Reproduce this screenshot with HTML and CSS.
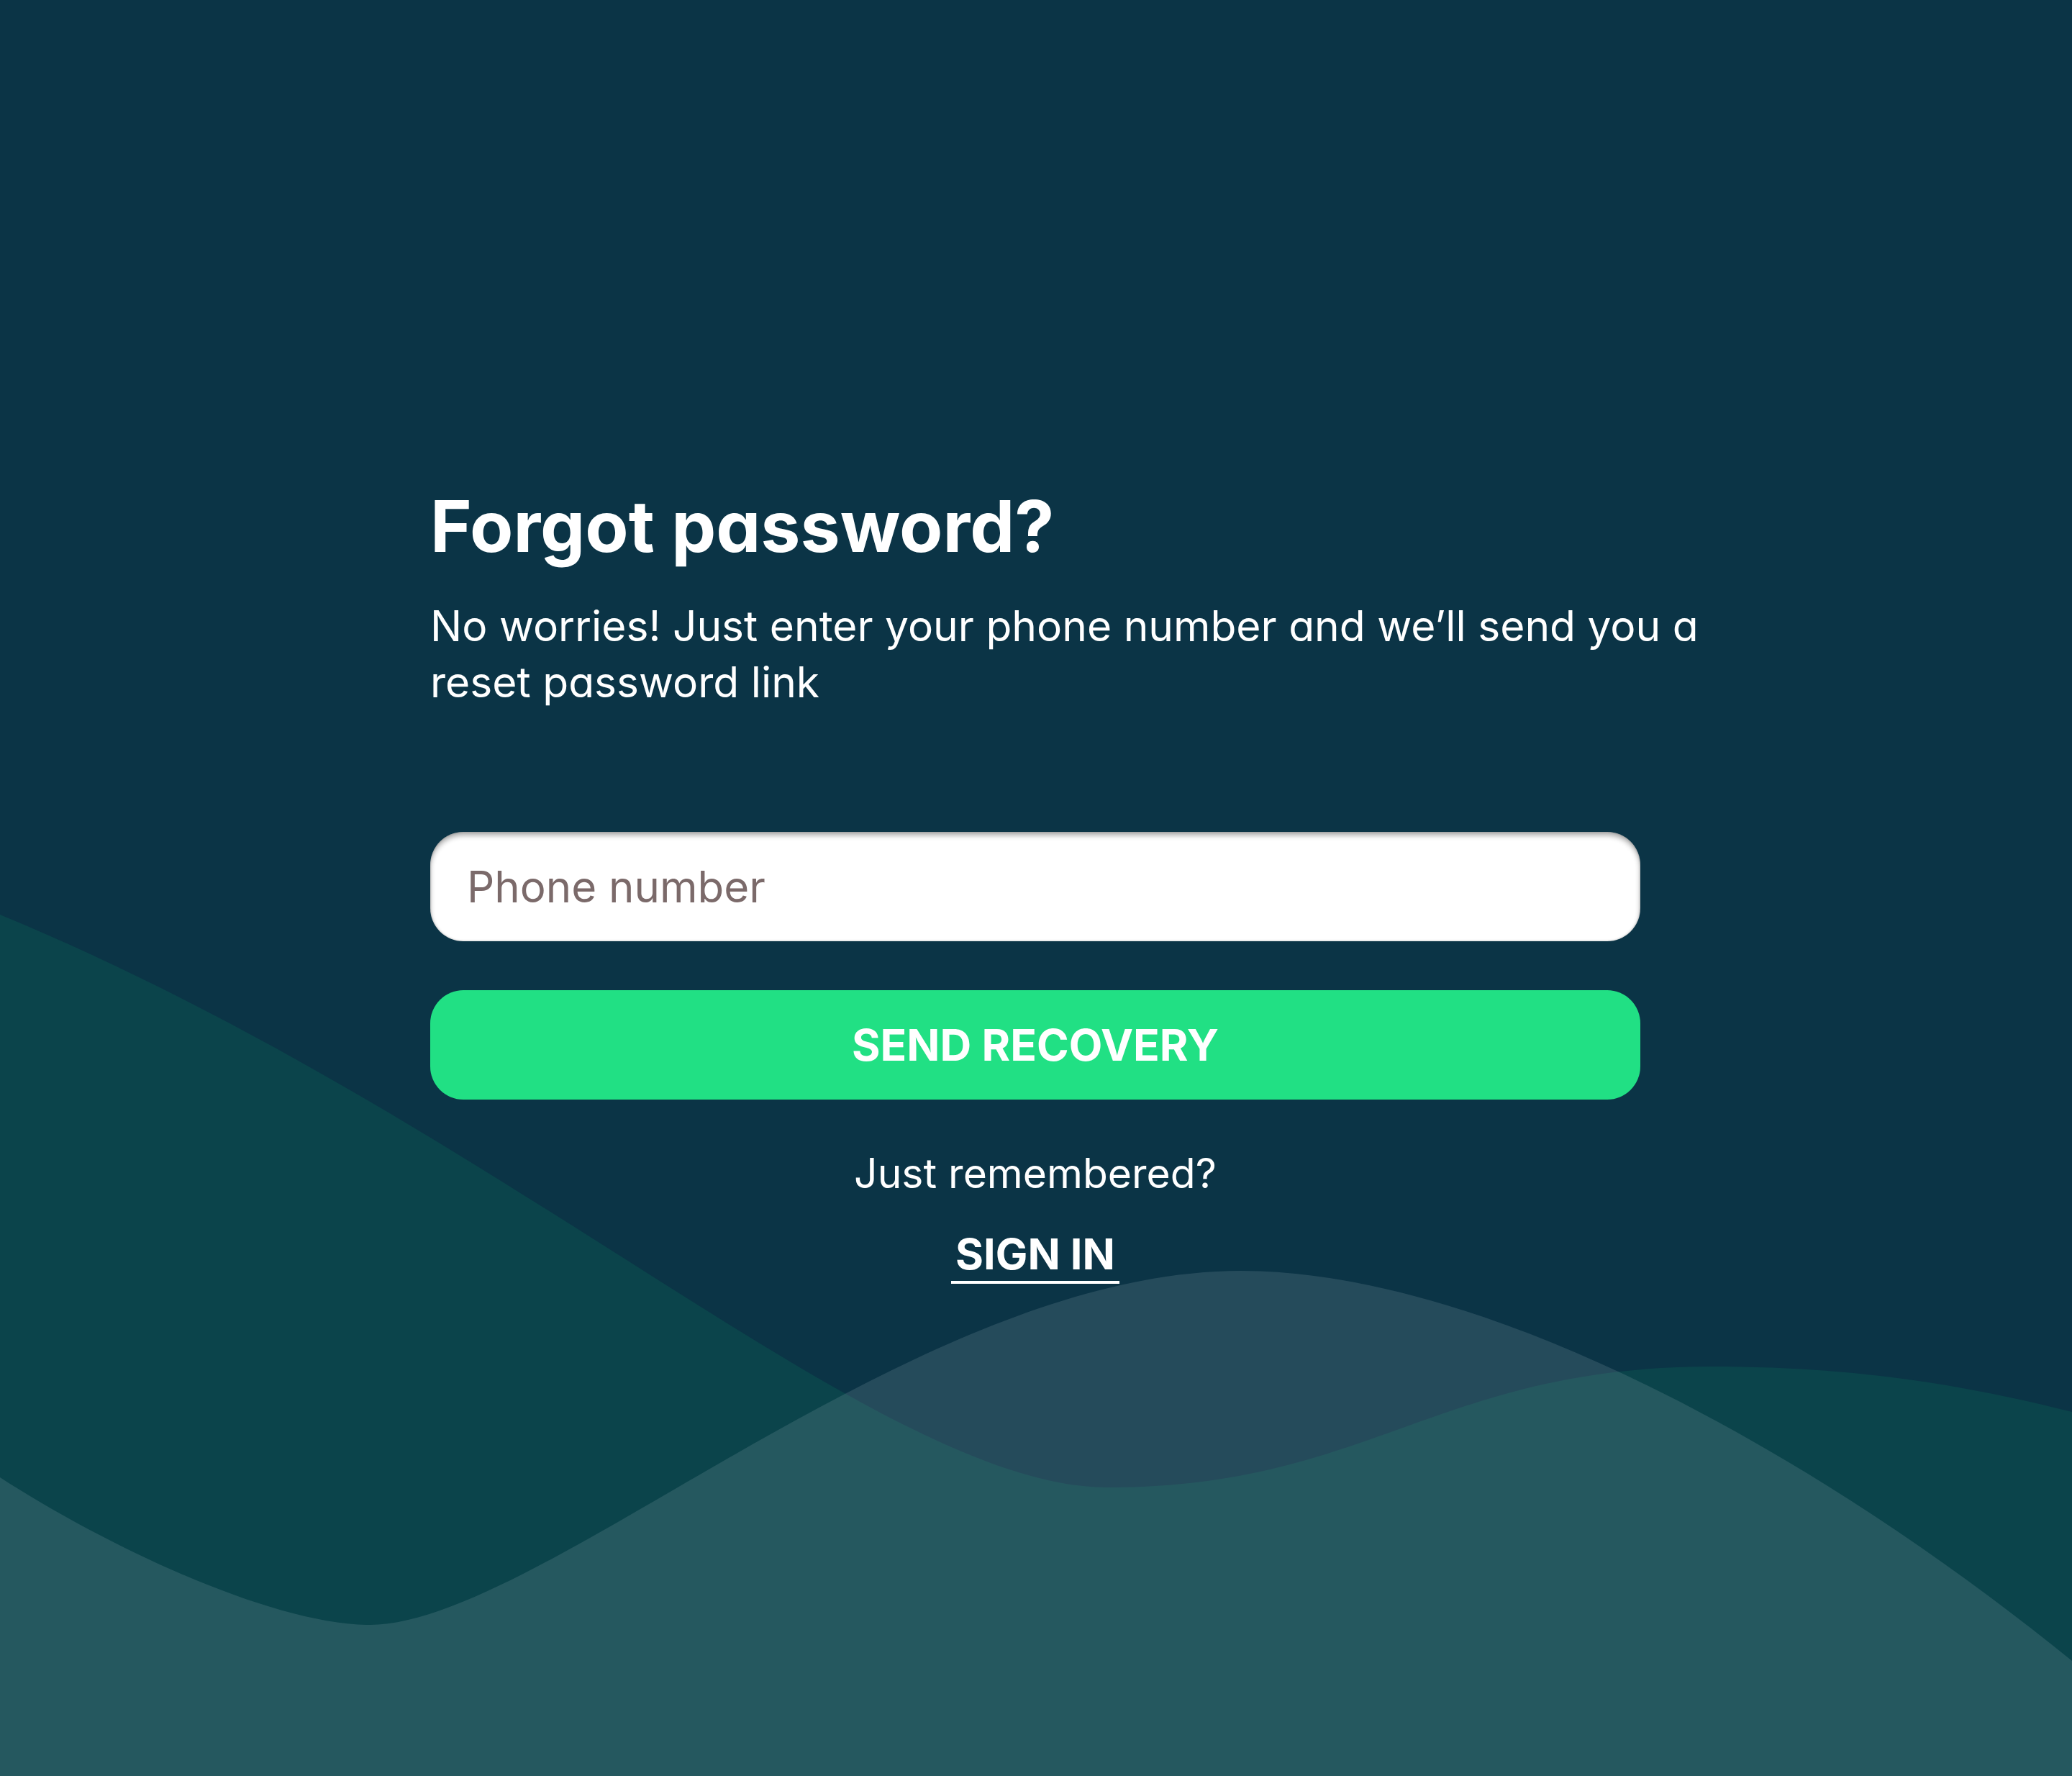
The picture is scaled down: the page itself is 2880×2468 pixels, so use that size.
FILE: index.html
```html
<!DOCTYPE html>
<html lang="en">
<head>
<meta charset="utf-8">
<title>Forgot password</title>
<link rel="stylesheet" href="styles.css">
</head>
<body>
<main class="page">
  <svg class="waves" viewBox="0 0 2880 2468" preserveAspectRatio="none" aria-hidden="true">
    <path class="wave-a" d="M0,1271 C700,1560 1220,2067 1541,2067 C1900,2067 2000,1899 2378,1899 C2600,1899 2750,1930 2880,1962 L2880,2468 L0,2468 Z"/>
    <path class="wave-b" d="M0,2053 C150,2150 380,2258 514,2258 C750,2258 1270,1766 1725,1766 C2050,1766 2500,2000 2880,2308 L2880,2468 L0,2468 Z"/>
  </svg>
  <section class="content">
    <h1 class="title">Forgot password?</h1>
    <p class="subtitle">No worries! Just enter your phone number and we’ll send you a reset password link</p>
    <form class="form">
      <input class="field" type="tel" placeholder="Phone number">
      <button class="btn" type="button">SEND RECOVERY</button>
      <p class="hint">Just remembered?</p>
      <a class="signin" href="#">SIGN IN</a>
    </form>
  </section>
</main>
</body>
</html>
```
FILE: styles.css
```css
html, body {
  margin: 0;
  padding: 0;
}
body {
  background: #0b3446;
  font-family: "Inter", "Lato", "Noto Sans", sans-serif;
  font-feature-settings: "cv11" 1;
  color: #ffffff;
}
.page {
  position: relative;
  min-height: 2468px;
  overflow: hidden;
  background: #0b3446;
}
.waves {
  position: absolute;
  left: 0;
  top: 0;
  width: 100%;
  height: 2468px;
}
.wave-a {
  fill: #0b444b;
}
.wave-b {
  fill: rgba(153, 175, 186, 0.19);
}
.content {
  position: relative;
  width: 1840px;
  padding: 673px 0 0 598px;
}
.title {
  margin: 0;
  font-size: 98.5px;
  line-height: 118px;
  font-weight: 700;
}
.subtitle {
  margin: 40px 0 0;
  font-size: 58.7px;
  line-height: 78px;
  font-weight: 400;
}
.form {
  width: 1682px;
  margin-top: 169px;
  display: flex;
  flex-direction: column;
  align-items: center;
}
.field {
  box-sizing: border-box;
  width: 100%;
  height: 152px;
  border: none;
  outline: none;
  border-radius: 46px;
  padding: 0 48px 0 51px;
  background: #ffffff;
  box-shadow: inset 0 5px 7px rgba(0, 0, 0, 0.32), inset 0 0 3px rgba(0, 0, 0, 0.25);
  font-family: inherit;
  font-feature-settings: "cv11" 1;
  font-size: 60px;
  color: #3a3030;
}
.field::placeholder {
  color: #7b6a6a;
  opacity: 1;
}
.btn {
  width: 100%;
  height: 152px;
  margin-top: 68px;
  border: none;
  border-radius: 46px;
  background: #21e084;
  color: #ffffff;
  font-family: inherit;
  font-feature-settings: "cv11" 1;
  font-size: 60.5px;
  font-weight: 700;
  cursor: pointer;
}
.hint {
  margin: 60px 0 0;
  font-size: 57px;
  line-height: 86px;
}
.signin {
  display: inline-block;
  margin-top: 33px;
  padding: 0 6px 2px;
  border-bottom: 4px solid #ffffff;
  color: #ffffff;
  text-decoration: none;
  font-size: 59.5px;
  line-height: 71px;
  font-weight: 700;
}
```
